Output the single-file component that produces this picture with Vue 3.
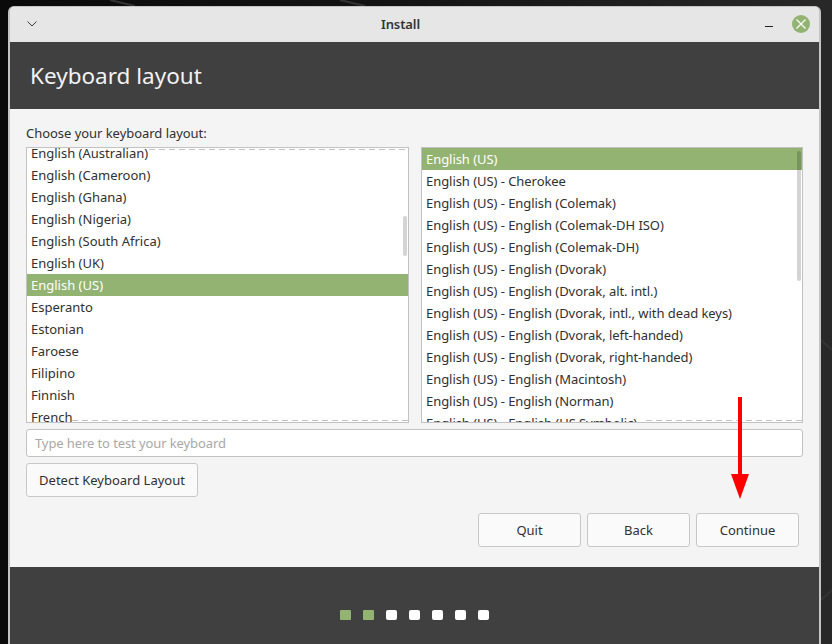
<script setup>
const left = ['English (Australian)','English (Cameroon)','English (Ghana)','English (Nigeria)','English (South Africa)','English (UK)','English (US)','Esperanto','Estonian','Faroese','Filipino','Finnish','French'];
const right = ['English (US)','English (US) - Cherokee','English (US) - English (Colemak)','English (US) - English (Colemak-DH ISO)','English (US) - English (Colemak-DH)','English (US) - English (Dvorak)','English (US) - English (Dvorak, alt. intl.)','English (US) - English (Dvorak, intl., with dead keys)','English (US) - English (Dvorak, left-handed)','English (US) - English (Dvorak, right-handed)','English (US) - English (Macintosh)','English (US) - English (Norman)','English (US) - English (US Symbolic)'];
const steps = [1,1,0,0,0,0,0];
</script>

<template>
  <div class="desktop">
    <svg class="wallpaper" width="832" height="644" viewBox="0 0 832 644">
      <path d="M110 0 L135 6 M340 0 L365 6 M821 340 L832 350 M821 600 L832 590" stroke="#333" stroke-width="2" fill="none"/>
    </svg>
    <div class="window">
      <div class="titlebar">
        <svg class="chev" width="12" height="8" viewBox="0 0 12 8"><path d="M1.5 1.5 L6 6 L10.5 1.5" fill="none" stroke="#3c3c3c" stroke-width="1"/></svg>
        <span class="title">Install</span>
        <div class="controls">
          <span class="min"></span>
          <span class="close">
            <svg width="18" height="18" viewBox="0 0 18 18"><path d="M4.5 4.5 L13.5 13.5 M13.5 4.5 L4.5 13.5" stroke="#fff" stroke-width="1.1" fill="none"/></svg>
          </span>
        </div>
      </div>
      <div class="header">Keyboard layout</div>
      <div class="body">
        <div class="prompt">Choose your keyboard layout:</div>
        <div class="lists">
          <div class="list list-left">
            <div class="rows rows-left">
              <div v-for="r in left" :key="r" class="row" :class="{ sel: r === 'English (US)' }">{{ r }}</div>
            </div>
            <span class="dash dash-top dash-left-top"></span>
            <span class="dash dash-bottom dash-left-bottom"></span>
            <span class="thumb thumb-left"></span>
          </div>
          <div class="list list-right">
            <div class="rows rows-right">
              <div v-for="(r, i) in right" :key="r" class="row" :class="{ sel: i === 0 }">{{ r }}</div>
            </div>
            <span class="dash dash-bottom dash-right-bottom"></span>
            <span class="thumb thumb-right"></span>
          </div>
        </div>
        <div class="input">Type here to test your keyboard</div>
        <button class="btn detect">Detect Keyboard Layout</button>
        <div class="actions">
          <button class="btn act">Quit</button>
          <button class="btn act">Back</button>
          <button class="btn act">Continue</button>
        </div>
      </div>
      <div class="footer">
        <span v-for="(s, i) in steps" :key="i" class="dot" :class="{ on: s }"></span>
      </div>
    </div>
    <svg class="arrow" width="24" height="106" viewBox="0 0 24 106">
      <rect x="10" y="0" width="4" height="80" fill="#fe0000"/>
      <path d="M3 77 H21 L12 102 Z" fill="#fe0000"/>
    </svg>
  </div>
</template>

<style>
html, body { margin: 0; background: #0c0c0c; }
</style>

<style scoped>
.desktop {
  position: relative;
  width: 832px;
  height: 644px;
  overflow: hidden;
  background: linear-gradient(90deg, #0a0a0a 0%, #141414 50%, #282828 98%);
  padding: 6px 11px 0 8px;
  box-sizing: border-box;
  font-family: "Noto Sans", "Open Sans", sans-serif;
  font-size: 13px;
  color: #303030;
}
.wallpaper { position: absolute; left: 0; top: 0; }
.window {
  position: relative;
  height: 638px;
  box-sizing: border-box;
  border: 2px solid #c4c4c4;
  border-width: 1px 2px 0 2px;
  border-radius: 6px 6px 0 0;
  display: flex;
  flex-direction: column;
  overflow: hidden;
  background: #f4f4f4;
}
.titlebar {
  height: 35px;
  flex: none;
  box-sizing: border-box;
  padding: 0 9px 1px 16px;
  background: #e6e6e6;
  display: flex;
  align-items: center;
  position: relative;
}
.chev { display: block; }
.title {
  position: absolute;
  left: 0; right: 28px;
  text-align: center;
  font-weight: 600;
  font-size: 13px;
  letter-spacing: -.1px;
  color: #333;
}
.controls { margin-left: auto; display: flex; align-items: center; gap: 19px; position: relative; }
.min { width: 8px; height: 1px; background: #222; margin-top: 5px; }
.close {
  width: 18px; height: 18px; border-radius: 50%;
  background: #92b372;
  display: block;
}
.close svg { display: block; }
.header {
  height: 67px;
  flex: none;
  background: #404040;
  color: #f2f2f2;
  font-size: 22.5px;
  line-height: 67px;
  padding-left: 20px;
}
.body {
  flex: 1;
  padding: 16px 18px 0 16px;
  display: flex;
  flex-direction: column;
  align-items: flex-start;
  min-height: 0;
}
.prompt { line-height: 16px; height: 22px; letter-spacing: -.04px; }
.lists { display: flex; gap: 12px; width: 777px; }
.list {
  position: relative;
  flex: none;
  height: 276px;
  box-sizing: border-box;
  border: 1px solid #c2c2c2;
  background: #fff;
  overflow: hidden;
}
.list-left { width: 383px; }
.list-right { width: 382px; }
.rows-left { margin-top: -6px; }
.rows-right { letter-spacing: -.055px; }
.row {
  height: 22px;
  line-height: 22px;
  padding-left: 4px;
  white-space: nowrap;
}
.row.sel { background: #92b372; color: #fff; }
.dash {
  position: absolute;
  right: 0;
  height: 1px;
  background: repeating-linear-gradient(90deg, #c4c4c4 0 6px, transparent 6px 10px);
}
.dash-top { top: 1px; }
.dash-bottom { bottom: 1px; }
.dash-left-top { left: 122px; }
.dash-left-bottom { left: 45px; }
.dash-right-bottom { left: 224px; }
.thumb {
  position: absolute;
  width: 4px;
  border-radius: 2px;
  background: rgba(0, 0, 0, .17);
}
.thumb-left { left: 376px; top: 68px; height: 40px; }
.thumb-right { left: 375px; top: 3px; height: 130px; }
.input {
  width: 777px;
  height: 28px;
  margin-top: 6px;
  box-sizing: border-box;
  border: 1px solid #c2c2c2;
  border-radius: 3px;
  background: #fff;
  color: #a8a8a8;
  line-height: 26px;
  padding-left: 8px;
  letter-spacing: -.1px;
}
.btn {
  font: inherit;
  color: #303030;
  background: #fafafa;
  border: 1px solid #c8c8c8;
  border-radius: 3px;
  box-sizing: border-box;
  padding: 0;
  height: 34px;
}
.detect { width: 172px; margin-top: 6px; }
.actions { display: flex; gap: 6px; margin-top: 16px; width: 773px; justify-content: flex-end; }
.act { width: 103px; }
.footer {
  height: 77px;
  flex: none;
  background: #404040;
  box-sizing: border-box;
  padding: 43px 0 0 330px;
  display: flex;
  align-items: flex-start;
  gap: 12px;
}
.dot { width: 11px; height: 10px; border-radius: 2px; background: #fff; }
.dot.on { background: #92b372; border-radius: 1px; }
.arrow { position: absolute; left: 728px; top: 397px; }
</style>
